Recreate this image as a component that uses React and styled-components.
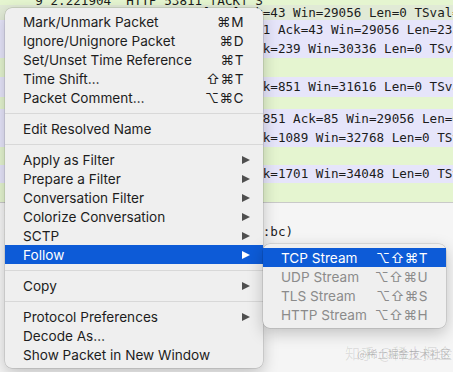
import React from 'react';
import styled, { createGlobalStyle } from 'styled-components';

const GlobalStyle = createGlobalStyle`
  html, body {
    margin: 0;
    padding: 0;
  }
  body {
    width: 453px;
    height: 372px;
    overflow: hidden;
    background: #f5f5f5;
  }
`;

// hidden part of each line sits under the menu, visible part starts at column 34
const packets = [
  { tone: 'http', h: 5, peek: true, pre: '    9 2.221904  HTTP 53811 [ACK] Seq=1', cut: 34, text: '' },
  { tone: 'top', h: 15, pre: '   10 2.222238  TCP 53811 [ACK] Se', cut: 33, text: 'k=43 Win=29056 Len=0 TSval=1482' },
  { tone: 'tcp', h: 19, pre: '   11 2.222450  TCP 80 > 53811 Seq=', text: '1 Ack=43 Win=29056 Len=235 TSval' },
  { tone: 'tcp', h: 19, pre: '   12 2.223011  TCP 53811 > 80 Ac', text: 'k=239 Win=30336 Len=0 TSval=148' },
  { tone: 'http', h: 19, pre: '   13 2.224180  HTTP GET /index.html', text: '' },
  { tone: 'tcp', h: 20, pre: '   14 2.224531  TCP 53811 > 80 Ac', text: 'k=851 Win=31616 Len=0 TSval=148' },
  { tone: 'http', h: 12, pre: '', text: '' },
  { tone: 'tcp', h: 19, pre: '   16 2.227004  TCP 80 > 53811 Seq=', text: '851 Ack=85 Win=29056 Len=0 TSv' },
  { tone: 'tcp', h: 19, pre: '   17 2.227381  TCP 53811 > 80 Ac', text: 'k=1089 Win=32768 Len=0 TSval=14' },
  { tone: 'http', h: 18, pre: '   18 2.228814  HTTP GET /a.css', text: '' },
  { tone: 'tcp', h: 18, pre: '   19 2.229102  TCP 53811 > 80 Ac', text: 'k=1701 Win=34048 Len=0 TSval=14' },
  { tone: 'http', h: 19, pre: '   20 2.230442  HTTP 200 OK', text: '' },
];

const details = [
  { pre: '> Frame 10: 66 bytes on wire', text: '' },
  { pre: '> Ethernet II, Src: Apple_4d:8a:bc', text: ':bc)' },
];

const menu = [
  { label: 'Mark/Unmark Packet', keys: '⌘M' },
  { label: 'Ignore/Unignore Packet', keys: '⌘D' },
  { label: 'Set/Unset Time Reference', keys: '⌘T' },
  { label: 'Time Shift…', keys: '⇧⌘T' },
  { label: 'Packet Comment…', keys: '⌥⌘C' },
  'sep',
  { label: 'Edit Resolved Name' },
  'sep',
  { label: 'Apply as Filter', sub: true },
  { label: 'Prepare a Filter', sub: true },
  { label: 'Conversation Filter', sub: true },
  { label: 'Colorize Conversation', sub: true },
  { label: 'SCTP', sub: true },
  { label: 'Follow', sub: true, active: true },
  'sep',
  { label: 'Copy', sub: true },
  'sep',
  { label: 'Protocol Preferences', sub: true },
  { label: 'Decode As…' },
  { label: 'Show Packet in New Window' },
];

const follow = [
  { label: 'TCP Stream', keys: '⌥⇧⌘T', active: true },
  { label: 'UDP Stream', keys: '⌥⇧⌘U', disabled: true },
  { label: 'TLS Stream', keys: '⌥⇧⌘S', disabled: true },
  { label: 'HTTP Stream', keys: '⌥⇧⌘H', disabled: true },
];

const tones = {
  top: '#e1ead6',
  tcp: '#e6e5fa',
  http: '#e5f5d0',
};

export default function App() {
  return (
    <Screen>
      <GlobalStyle />
      <PacketList>
        {packets.map((p, i) => (
          <PacketRow key={i} $tone={p.tone} $h={p.h} $peek={p.peek}>
            {p.pre.padEnd(p.cut || 34).slice(0, p.cut || 34) + p.text}
          </PacketRow>
        ))}
      </PacketList>
      <DetailPane>
        {details.map((d, i) => (
          <DetailLine key={i}>{d.pre.padEnd(34).slice(0, 34) + d.text}</DetailLine>
        ))}
      </DetailPane>

      <Watermark>
        <WatermarkBig>知乎 @稀土掘金</WatermarkBig>
        <WatermarkSmall>@稀土掘金技术社区</WatermarkSmall>
      </Watermark>

      <Menu>
        {menu.map((item, i) =>
          item === 'sep' ? (
            <Separator key={i} />
          ) : (
            <MenuItem key={i} $active={item.active}>
              <Label>{item.label}</Label>
              {item.keys && <Keys>{item.keys}</Keys>}
              {item.sub && <Arrow $active={item.active} />}
            </MenuItem>
          )
        )}
      </Menu>

      <Submenu>
        {follow.map((item, i) => (
          <SubItem key={i} $active={item.active} $disabled={item.disabled}>
            <Label>{item.label}</Label>
            <SubKeys>{item.keys}</SubKeys>
          </SubItem>
        ))}
      </Submenu>
    </Screen>
  );
}

const Screen = styled.div`
  position: relative;
  width: 453px;
  height: 372px;
  overflow: hidden;
  background: #f5f5f5;
`;

const PacketList = styled.div`
  display: flex;
  flex-direction: column;
  border-bottom: 1px solid #c9c9c9;
`;

const PacketRow = styled.div`
  height: ${p => p.$h}px;
  box-sizing: border-box;
  line-height: ${p => (p.$peek ? 0 : p.$h)}px;
  padding-top: ${p => (p.$peek ? 1 : 0)}px;
  padding-left: 5px;
  background: ${p => tones[p.$tone]};
  font-family: "DejaVu Sans Mono", monospace;
  font-size: 12.6px;
  color: #1c1c1c;
  white-space: pre;
  overflow: hidden;
`;

const DetailPane = styled.div`
  display: flex;
  flex-direction: column;
  background: #f5f5f5;
`;

const DetailLine = styled.div`
  height: 19px;
  line-height: 19px;
  padding-left: 5px;
  font-family: "DejaVu Sans Mono", monospace;
  font-size: 12.6px;
  color: #1c1c1c;
  white-space: pre;
`;

const Watermark = styled.div`
  position: absolute;
  left: 345px;
  top: 342px;
  width: 100px;
  height: 22px;
  font-family: "Noto Sans CJK SC", sans-serif;
`;

const WatermarkBig = styled.div`
  position: absolute;
  left: 0;
  top: 0;
  font-size: 15px;
  line-height: 22px;
  color: rgba(0, 0, 0, 0.1);
  white-space: nowrap;
`;

const WatermarkSmall = styled.div`
  position: absolute;
  left: 12px;
  top: 5px;
  font-size: 10.5px;
  line-height: 14px;
  color: rgba(0, 0, 0, 0.22);
  white-space: nowrap;
`;

const Menu = styled.div`
  position: absolute;
  left: 5px;
  top: 8px;
  width: 258px;
  padding: 4px 0;
  box-sizing: border-box;
  background: #efefef;
  border-radius: 7px;
  box-shadow: 0 0 0 0.5px rgba(0, 0, 0, 0.18), 0 5px 16px rgba(0, 0, 0, 0.22);
  display: flex;
  flex-direction: column;
  font-family: Inter, "DejaVu Sans", sans-serif;
  font-size: 13.6px;
  color: #1d1d1d;
`;

const MenuItem = styled.div`
  height: 19px;
  display: flex;
  align-items: center;
  padding: 0 19px 0 18px;
  background: ${p => (p.$active ? '#0d5bd7' : 'transparent')};
  color: ${p => (p.$active ? '#ffffff' : 'inherit')};
`;

const Label = styled.span`
  flex: 1;
  white-space: nowrap;
`;

const Keys = styled.span`
  white-space: nowrap;
  letter-spacing: 0.5px;
`;

const Arrow = styled.span`
  width: 0;
  height: 0;
  margin-right: -6px;
  border-top: 4.5px solid transparent;
  border-bottom: 4.5px solid transparent;
  border-left: 8px solid ${p => (p.$active ? '#ffffff' : '#4f4f4f')};
`;

const Separator = styled.div`
  height: 12px;
  display: flex;
  align-items: center;
  &::after {
    content: '';
    flex: 1;
    height: 1px;
    background: #d8d8d8;
  }
`;

const Submenu = styled.div`
  position: absolute;
  left: 263px;
  top: 244px;
  width: 183px;
  padding: 4px 0;
  box-sizing: border-box;
  background: #efefef;
  border-radius: 7px;
  box-shadow: 0 0 0 0.5px rgba(0, 0, 0, 0.18), 0 5px 16px rgba(0, 0, 0, 0.22);
  display: flex;
  flex-direction: column;
  font-family: Inter, "DejaVu Sans", sans-serif;
  font-size: 13.6px;
`;

const SubItem = styled.div`
  height: 19px;
  display: flex;
  align-items: center;
  padding: 0 18px 0 18px;
  background: ${p => (p.$active ? '#0d5bd7' : 'transparent')};
  color: ${p => (p.$active ? '#ffffff' : p.$disabled ? '#8b8b8b' : '#1d1d1d')};
`;

const SubKeys = styled.span`
  white-space: nowrap;
  letter-spacing: 0.4px;
`;
